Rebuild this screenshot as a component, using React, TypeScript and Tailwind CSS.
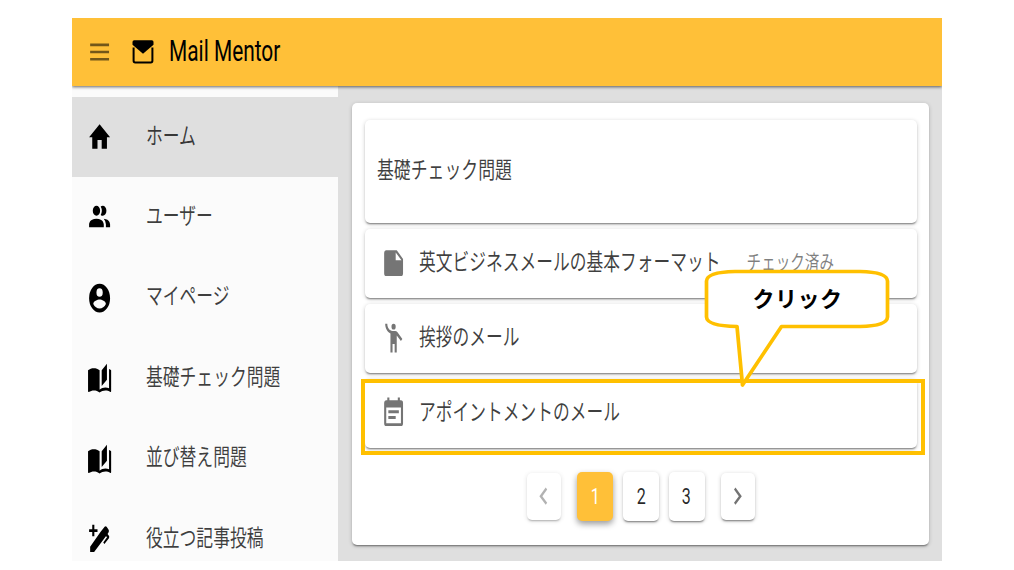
import React from "react";

const JP = "font-['Roboto','Noto_Sans_CJK_JP',sans-serif]";

function Icon({ d, className = "" }: { d: string; className?: string }) {
  return (
    <svg viewBox="0 0 24 24" preserveAspectRatio="none" className={`h-[34.4px] w-[25.2px] shrink-0 ${className}`} fill="currentColor">
      <path d={d} />
    </svg>
  );
}

const HOME = "M10,20V14H14V20H19V12H22L12,3L2,12H5V20H10Z";
const USERS =
  "M16 17V19H2V17S2 13 9 13 16 17 16 17M12.5 7.5A3.5 3.5 0 1 0 9 11A3.5 3.5 0 0 0 12.5 7.5M15.94 13A5.32 5.32 0 0 1 18 17V19H22V17S22 13.37 15.94 13M15 4A3.39 3.39 0 0 0 13.07 4.59A5 5 0 0 1 13.07 10.41A3.39 3.39 0 0 0 15 11A3.5 3.5 0 0 0 15 4Z";
const ACCOUNT =
  "M12,19.2C9.5,19.2 7.29,17.92 6,16C6.03,14 10,12.9 12,12.9C14,12.9 17.97,14 18,16C16.71,17.92 14.5,19.2 12,19.2M12,5A3,3 0 0,1 15,8A3,3 0 0,1 12,11A3,3 0 0,1 9,8A3,3 0 0,1 12,5M12,2A10,10 0 0,0 2,12A10,10 0 0,0 12,22A10,10 0 0,0 22,12C22,6.47 17.5,2 12,2Z";
const BOOK =
  "M19,2L14,6.5V17.5L19,13V2M6.5,5C4.55,5 2.45,5.4 1,6.5V21.16C1,21.41 1.25,21.66 1.5,21.66C1.6,21.66 1.65,21.59 1.75,21.59C3.1,20.94 5.05,20.5 6.5,20.5C8.45,20.5 10.55,20.9 12,22C13.35,21.15 15.8,20.5 17.5,20.5C19.15,20.5 20.85,20.81 22.25,21.56C22.35,21.61 22.4,21.59 22.5,21.59C22.75,21.59 23,21.34 23,21.09V6.5C22.4,6.05 21.75,5.75 21,5.5V19C19.9,18.65 18.7,18.5 17.5,18.5C15.8,18.5 13.35,19.15 12,20V6.5C10.55,5.4 8.45,5 6.5,5Z";
const PEN =
  "M3 17.2L13 6.8L16.8 3.3Q17.8 2.5 18.7 3.4L20.6 5.4Q21.2 6.4 20.6 7.2L19.6 8.400L21 9.800Q21.500 10.400 20.900 11.300L16.600 15.400L15.500 14.300L19.200 10.500L18 9.900L6.800 21H3ZM7 2V5H10V7H7V10H5V7H2V5H5V2H7Z";
const NOTE = "M14,10V4.5L19.5,10M5,3C3.89,3 3,3.89 3,5V19A2,2 0 0,0 5,21H19A2,2 0 0,0 21,19V9L15,3H5Z";
const PERSON =
  "M12 2a2 2 0 1 0 0 4a2 2 0 1 0 0-4zM15.89 8.11C15.5 7.72 14.83 7 13.53 7h-2.54C8.24 6.99 6 4.75 6 2H4c0 3.16 2.11 5.84 5 6.71V22h2v-6h2v6h2V10.05L18.95 14l1.41-1.41-4.47-4.48z";
const CALENDAR =
  "M14,14H7V16H14M19,19H5V8H19M19,3H18V1H16V3H8V1H6V3H5C3.89,3 3,3.9 3,5V19A2,2 0 0,0 5,21H19A2,2 0 0,0 21,19V5A2,2 0 0,0 19,3M17,10H7V12H17V10Z";
const MENU = "M3,6H21V7.8H3V6M3,11H21V12.8H3V11M3,16H21V17.8H3V16Z";
const LEFT = "M15.41,16.58L10.83,12L15.41,7.41L14,6L8,12L14,18L15.41,16.58Z";
const RIGHT = "M8.59,16.58L13.17,12L8.59,7.41L10,6L16,12L10,18L8.59,16.58Z";

const nav = [
  { icon: HOME, label: "ホーム", active: true },
  { icon: USERS, label: "ユーザー" },
  { icon: ACCOUNT, label: "マイページ" },
  { icon: BOOK, label: "基礎チェック問題" },
  { icon: BOOK, label: "並び替え問題" },
  { icon: PEN, label: "役立つ記事投稿" },
];

const lessons = [
  { icon: NOTE, label: "英文ビジネスメールの基本フォーマット", status: "チェック済み" },
  { icon: PERSON, label: "挨拶のメール" },
  { icon: CALENDAR, label: "アポイントメントのメール" },
];

const CARD = "rounded-[5px] bg-white shadow-[0_2px_2px_-1px_rgba(0,0,0,0.45),0_1px_4px_rgba(0,0,0,0.2)]";

export default function App() {
  return (
    <div className={`relative h-[570px] w-[1014px] overflow-hidden bg-white pl-[72px] pt-[18px] ${JP}`}>
      <div className="flex h-[543px] w-[870px] flex-col overflow-hidden bg-[#dfdfdf]">
        <header className="relative z-10 flex h-[67.5px] shrink-0 items-center bg-[#ffc038] pl-[15px] shadow-[0_1px_3px_rgba(0,0,0,0.6)]">
          <Icon d={MENU} className="text-black/55" />
          <svg viewBox="0 0 22 24" className="ml-[19.5px] h-6 w-[22px]" fill="none">
            <path d="M1.6 7.5V20.8Q1.6 22.5 3.2 22.5H18.8Q20.4 22.5 20.4 20.8V7.5" stroke="black" strokeWidth="2" />
            <path d="M2.2 0.3H19.8Q21.5 0.3 21.5 2V4.8L11 13.8L0.5 4.8V2Q0.5 0.3 2.2 0.3Z" fill="black" />
          </svg>
          <span className="ml-[15px] origin-left scale-x-[0.73] whitespace-nowrap text-[28.6px] leading-none text-black">Mail Mentor</span>
        </header>
        <div className="flex min-h-0 flex-1">
          <nav className="w-[266px] shrink-0 bg-[#fbfbfb] pt-[11.5px]">
            {nav.map((n) => (
              <div key={n.label} className={`flex h-[80.4px] items-center pl-[15px] ${n.active ? "bg-[#dfdfdf]" : ""}`}>
                <Icon d={n.icon} className="text-black" />
                <span className="relative -top-px ml-[33.8px] origin-left scale-x-[0.73] whitespace-nowrap text-[23px] leading-none text-black/75">{n.label}</span>
              </div>
            ))}
          </nav>
          <main className="flex-1 pl-[14px] pt-[17.5px]">
            <section className={`h-[442px] w-[577px] px-[12.5px] pt-[17px] ${CARD}`}>
              <div className="flex flex-col gap-[6px]">
                <div className={`flex h-[103px] items-center pl-3 ${CARD}`}>
                  <span className="relative -top-px origin-left scale-x-[0.733] whitespace-nowrap text-[23px] leading-none text-black/75">基礎チェック問題</span>
                </div>
                {lessons.map((l) => (
                  <div key={l.label} className={`flex h-[69px] items-center pl-4 ${CARD}`}>
                    <Icon d={l.icon} className="text-[#757575]" />
                    <div className="relative -top-px ml-[13.5px] flex origin-left scale-x-[0.728] items-center whitespace-nowrap text-[23px] leading-none text-black/75">
                      {l.label}
                      {l.status && <span className="ml-[36px] text-[20px] text-black/50">{l.status}</span>}
                    </div>
                  </div>
                ))}
              </div>
              <div className="mt-[23.5px] flex items-center pl-[162.5px] text-[22px]">
                <div className={`flex h-[47px] w-[34px] items-center justify-center opacity-60 ${CARD}`}>
                  <Icon d={LEFT} className="text-black/50" />
                </div>
                <div className="ml-[16px] flex h-[49px] w-9 items-center justify-center rounded-[5px] bg-[#ffc038] text-white shadow-[0_3px_6px_rgba(0,0,0,0.4)]">
                  <span className="scale-x-[0.73]">1</span>
                </div>
                <div className={`ml-[10px] flex h-[49px] w-9 items-center justify-center text-black/85 ${CARD}`}>
                  <span className="scale-x-[0.73]">2</span>
                </div>
                <div className={`ml-[9.5px] flex h-[49px] w-9 items-center justify-center text-black/85 ${CARD}`}>
                  <span className="scale-x-[0.73]">3</span>
                </div>
                <div className={`ml-[16px] flex h-[47px] w-[34px] items-center justify-center ${CARD}`}>
                  <Icon d={RIGHT} className="text-black/55" />
                </div>
              </div>
            </section>
          </main>
        </div>
      </div>
      <div className="absolute left-[361px] top-[378.5px] h-[76px] w-[564px] border-4 border-[#ffc000]" />
      <svg className="absolute left-[700px] top-[264px]" width="200" height="130" viewBox="0 0 200 130">
        <path d="M6.5 17Q7 8 35 7.5H160Q187 8 187.5 17V53Q187 62 160 62.5H81.5L42.5 121L37 62.5Q7 62 6.5 53Z" fill="white" stroke="#ffc000" strokeWidth="3.7" strokeLinejoin="round" />
      </svg>
      <span className="absolute left-[752.5px] top-[285px] whitespace-nowrap text-[22px] leading-6 font-bold tracking-[0.5px] text-black font-['Noto_Sans_CJK_JP',sans-serif]">クリック</span>
    </div>
  );
}
